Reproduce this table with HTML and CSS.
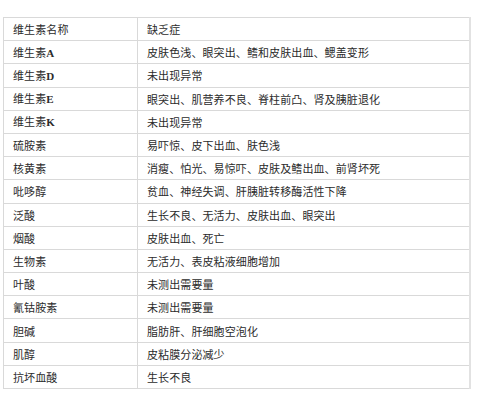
FILE: index.html
```html
<!DOCTYPE html>
<html lang="zh">
<head>
<meta charset="utf-8">
<link rel="stylesheet" href="styles.css">
</head>
<body>
<table class="vt">
<colgroup><col class="c1"><col class="c2"></colgroup>
<tr><td>维生素名称</td><td>缺乏症</td></tr>
<tr><td>维生素<b class="lt">A</b></td><td>皮肤色浅、眼突出、鳍和皮肤出血、鳃盖变形</td></tr>
<tr><td>维生素<b class="lt">D</b></td><td>未出现异常</td></tr>
<tr><td>维生素<b class="lt">E</b></td><td>眼突出、肌营养不良、脊柱前凸、肾及胰脏退化</td></tr>
<tr><td>维生素<b class="lt">K</b></td><td>未出现异常</td></tr>
<tr><td>硫胺素</td><td>易吓惊、皮下出血、肤色浅</td></tr>
<tr><td>核黄素</td><td>消瘦、怕光、易惊吓、皮肤及鳍出血、前肾坏死</td></tr>
<tr><td>吡哆醇</td><td>贫血、神经失调、肝胰脏转移酶活性下降</td></tr>
<tr><td>泛酸</td><td>生长不良、无活力、皮肤出血、眼突出</td></tr>
<tr><td>烟酸</td><td>皮肤出血、死亡</td></tr>
<tr><td>生物素</td><td>无活力、表皮粘液细胞增加</td></tr>
<tr><td>叶酸</td><td>未测出需要量</td></tr>
<tr><td>氰钴胺素</td><td>未测出需要量</td></tr>
<tr><td>胆碱</td><td>脂肪肝、肝细胞空泡化</td></tr>
<tr><td>肌醇</td><td>皮粘膜分泌减少</td></tr>
<tr><td>抗坏血酸</td><td>生长不良</td></tr>
</table>
</body>
</html>
```

FILE: styles.css
```css
html, body {
  margin: 0;
  padding: 0;
  background: #ffffff;
}
body {
  padding: 17px 0 0 3px;
}
.vt {
  border-collapse: collapse;
  width: 468px;
  table-layout: fixed;
  font-family: "Noto Sans CJK SC", "Noto Sans", sans-serif;
  font-size: 11px;
  letter-spacing: 0.1px;
  color: #2b2b2b;
  border: 1px solid #d9d9d9;
  border-right: 2px solid #e2e2e2;
}
.c1 { width: 134px; }
.vt td {
  border: 1px solid #d9d9d9;
  height: 22.2px;
  padding: 0 0 0 9px;
  vertical-align: middle;
  line-height: 14px;
  white-space: nowrap;
}
.lt {
  font-family: "Liberation Serif", "DejaVu Serif", serif;
  font-weight: bold;
  font-size: 11px;
  letter-spacing: 0;
}
```
